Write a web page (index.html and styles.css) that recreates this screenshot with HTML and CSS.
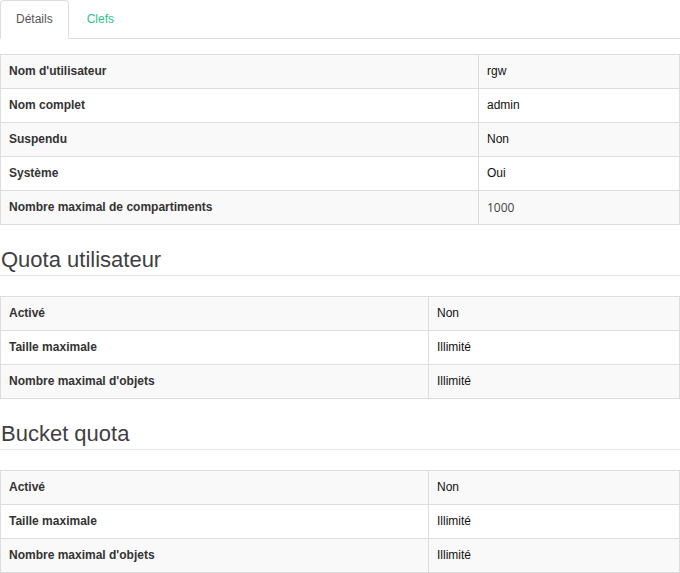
FILE: index.html
```html
<!DOCTYPE html>
<html lang="fr">
<head>
<meta charset="utf-8">
<link rel="stylesheet" href="styles.css">
</head>
<body>
<ul class="tabs">
  <li class="tab active"><a>Détails</a></li>
  <li class="tab"><a class="link">Clefs</a></li>
</ul>

<table class="info t-wide">
  <tr><th>Nom d'utilisateur</th><td>rgw</td></tr>
  <tr><th>Nom complet</th><td>admin</td></tr>
  <tr><th>Suspendu</th><td>Non</td></tr>
  <tr><th>Système</th><td>Oui</td></tr>
  <tr><th>Nombre maximal de compartiments</th><td><span class="num">1000</span></td></tr>
</table>

<h3 class="section">Quota utilisateur</h3>
<table class="info t-narrow">
  <tr><th>Activé</th><td>Non</td></tr>
  <tr><th>Taille maximale</th><td>Illimité</td></tr>
  <tr><th>Nombre maximal d'objets</th><td>Illimité</td></tr>
</table>

<h3 class="section">Bucket quota</h3>
<table class="info t-narrow">
  <tr><th>Activé</th><td>Non</td></tr>
  <tr><th>Taille maximale</th><td>Illimité</td></tr>
  <tr><th>Nombre maximal d'objets</th><td>Illimité</td></tr>
</table>
</body>
</html>
```

FILE: styles.css
```css
html, body {
  margin: 0;
  padding: 0;
  background: #fff;
}
body {
  font-family: "Liberation Sans", Arial, sans-serif;
  font-size: 12px;
  color: #333;
  width: 680px;
}
.tabs {
  list-style: none;
  margin: 0 0 15px 0;
  padding: 0;
  display: flex;
  border-bottom: 1px solid #ddd;
}
.tab {
  margin-bottom: -1px;
  margin-right: 2px;
}
.tab a {
  display: block;
  padding: 10px 15px;
  line-height: 17px;
  border: 1px solid transparent;
  border-radius: 4px 4px 0 0;
  color: #555;
}
.tab.active a {
  border-color: #ddd;
  border-bottom-color: #fff;
  background: #fff;
}
.tab a.link {
  color: #2bc38b;
}
.info {
  width: 680px;
  border-collapse: collapse;
  border: 1px solid #ddd;
  margin: 0 0 20px 0;
}
.info th, .info td {
  border: 1px solid #ddd;
  padding: 8px;
  height: 17px;
  line-height: 17px;
  text-align: left;
  vertical-align: top;
  font-size: 12px;
}
.info th {
  font-weight: bold;
  color: #333;
}
.info td {
  color: #111;
}
.info tr:nth-child(odd) {
  background: #f9f9f9;
}
.t-wide th { width: 461px; }
.t-narrow th { width: 411px; }
.num {
  display: inline-block;
  height: 17px;
  line-height: 17px;
  vertical-align: top;
  font-family: "Open Sans", sans-serif;
  color: #444;
}
.section {
  font-family: "Liberation Sans", Arial, sans-serif;
  font-weight: normal;
  font-size: 22px;
  line-height: 24px;
  color: #3f3f3f;
  margin: 23px 0 20px 0;
  padding: 0 0 3px 1px;
  border-bottom: 1px solid #e5e5e5;
}
```
